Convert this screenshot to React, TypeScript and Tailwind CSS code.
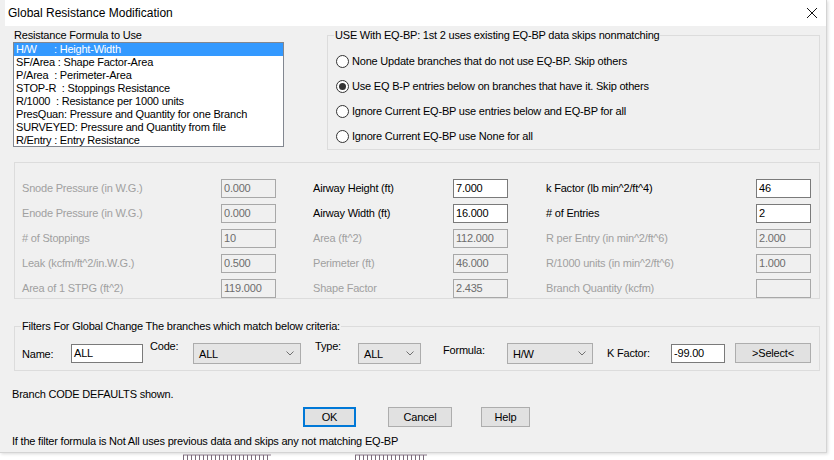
import React from 'react';

const formulas = [
  'H/W      : Height-Width',
  'SF/Area : Shape Factor-Area',
  'P/Area  : Perimeter-Area',
  'STOP-R  : Stoppings Resistance',
  'R/1000  : Resistance per 1000 units',
  'PresQuan: Pressure and Quantity for one Branch',
  'SURVEYED: Pressure and Quantity from file',
  'R/Entry : Entry Resistance',
];

const radios = [
  'None Update branches that do not use EQ-BP. Skip others',
  'Use EQ B-P entries below on branches that have it. Skip others',
  'Ignore Current EQ-BP use entries below and EQ-BP for all',
  'Ignore Current EQ-BP use None for all',
];

type Cell = { label: string; value: string; on?: boolean };

const rows: Cell[][] = [
  [
    { label: 'Snode Pressure (in W.G.)', value: '0.000' },
    { label: 'Airway Height (ft)', value: '7.000', on: true },
    { label: 'k Factor (lb min^2/ft^4)', value: '46', on: true },
  ],
  [
    { label: 'Enode Pressure (in W.G.)', value: '0.000' },
    { label: 'Airway Width (ft)', value: '16.000', on: true },
    { label: '# of Entries', value: '2', on: true },
  ],
  [
    { label: '# of Stoppings', value: '10' },
    { label: 'Area (ft^2)', value: '112.000' },
    { label: 'R per Entry (in min^2/ft^6)', value: '2.000' },
  ],
  [
    { label: 'Leak (kcfm/ft^2/in.W.G.)', value: '0.500' },
    { label: 'Perimeter (ft)', value: '46.000' },
    { label: 'R/1000 units (in min^2/ft^6)', value: '1.000' },
  ],
  [
    { label: 'Area of 1 STPG (ft^2)', value: '119.000' },
    { label: 'Shape Factor', value: '2.435' },
    { label: 'Branch Quantity (kcfm)', value: '' },
  ],
];

const Field = ({ value, on }: { value: string; on?: boolean }) => (
  <div
    className={`w-[55px] h-[19px] border px-[2px] leading-[17px] whitespace-pre ${
      on ? 'bg-white border-[#7a7a7a] text-black' : 'bg-[#f0f0f0] border-[#a8a8a8] text-[#6d6d6d]'
    }`}
  >
    {value}
  </div>
);

const Combo = ({ value, w }: { value: string; w: string }) => (
  <div className={`${w} h-[21px] bg-[#e5e5e5] border border-[#acacac] flex items-center justify-between pl-[5px] pr-[6px]`}>
    <span className="pt-[2px]">{value}</span>
    <svg width="8" height="5" viewBox="0 0 8 5">
      <path d="M0.5 0.5 L4 4 L7.5 0.5" fill="none" stroke="#707070" strokeWidth="1" />
    </svg>
  </div>
);

const Btn = ({ label, w, primary }: { label: string; w: string; primary?: boolean }) => (
  <div
    className={`${w} h-[20px] flex items-center justify-center bg-[#e1e1e1] ${
      primary ? 'border-2 border-[#0078d7]' : 'border border-[#adadad]'
    }`}
  >
    {label}
  </div>
);

export default function App() {
  return (
    <div className="w-[834px] h-[460px] bg-white overflow-hidden text-[11px] leading-[13px] tracking-[-0.2px] text-black font-['Liberation_Sans',Arial,sans-serif]">
      <div className="w-[827px] h-[453px] bg-[#f0f0f0] border-r border-b border-[#d4d4d4] shadow-[1px_1px_3px_rgba(0,0,0,0.15)] flex flex-col">
        {/* title bar */}
        <div className="ml-[5px] h-[26px] bg-white flex items-center justify-between pl-[3px] pr-[8px] shrink-0">
          <span className="text-[12px] tracking-normal text-black">Global Resistance Modification</span>
          <svg width="12" height="12" viewBox="0 0 12 12">
            <path d="M1 1 L11 11 M11 1 L1 11" stroke="#111" strokeWidth="1" />
          </svg>
        </div>

        {/* formula list + EQ-BP options */}
        <div className="flex items-start">
          <div className="ml-[13px] mt-[3px] w-[271px] flex flex-col">
            <div className="pl-[1px]">Resistance Formula to Use</div>
            <div className="h-[105px] bg-white border border-[#828790] flex flex-col">
              {formulas.map((f, i) => (
                <div
                  key={f}
                  className={`h-[13px] pl-[2px] whitespace-pre ${i === 0 ? 'bg-[#3399ff] text-white' : ''}`}
                >
                  {f}
                </div>
              ))}
            </div>
          </div>

          <fieldset className="ml-[43px] mt-[3px] w-[493px] border border-[#dcdcdc] pl-[8px] pt-[7px]">
            <legend className="-ml-[2px] px-[1px]">USE With EQ-BP: 1st 2 uses existing EQ-BP data skips nonmatching</legend>
            {radios.map((r, i) => (
              <div key={r} className="h-[25px] flex items-center">
                <div className="w-[13px] h-[13px] rounded-full border border-[#333] bg-white flex items-center justify-center">
                  {i === 1 && <div className="w-[7px] h-[7px] rounded-full bg-[#333]" />}
                </div>
                <span className="ml-[3px]">{r}</span>
              </div>
            ))}
          </fieldset>
        </div>

        {/* parameters */}
        <div className="ml-[14px] mt-[12px] w-[806px] border border-[#dcdcdc] pl-[7px] pt-[16px] flex flex-col gap-[6px]">
          {rows.map((row, i) => (
            <div key={i} className="h-[19px] flex items-center">
              <div className="w-[199px] text-[#a0a0a0]">{row[0].label}</div>
              <Field value={row[0].value} />
              <div className={`ml-[37px] w-[140px] ${row[1].on ? 'text-black' : 'text-[#a0a0a0]'}`}>{row[1].label}</div>
              <Field value={row[1].value} on={row[1].on} />
              <div className={`ml-[38px] w-[210px] ${row[2].on ? 'text-black' : 'text-[#a0a0a0]'}`}>{row[2].label}</div>
              <Field value={row[2].value} on={row[2].on} />
            </div>
          ))}
        </div>

        {/* filters */}
        <fieldset className="ml-[14px] mt-[21px] w-[806px] border border-[#dcdcdc] pl-[7px] pt-[10px] pb-[6px]">
          <legend className="-ml-[1px] px-[1px]">Filters For Global Change The branches which match below criteria:</legend>
          <div className="h-[21px] flex items-start">
            <div className="w-[49px] mt-[5px]">Name:</div>
            <div className="w-[72px] h-[19px] mt-[1px] bg-white border border-[#7a7a7a] px-[2px] leading-[17px]">ALL</div>
            <div className="ml-[7px] w-[43px] -mt-[3px]">Code:</div>
            <Combo value="ALL" w="w-[108px]" />
            <div className="ml-[14px] w-[43px] -mt-[3px]">Type:</div>
            <Combo value="ALL" w="w-[63px]" />
            <div className="ml-[22px] w-[64px] mt-[1px]">Formula:</div>
            <Combo value="H/W" w="w-[86px]" />
            <div className="ml-[14px] w-[64px] mt-[4px]">K Factor:</div>
            <div className="w-[54px] h-[19px] mt-[1px] bg-white border border-[#7a7a7a] px-[2px] leading-[17px]">-99.00</div>
            <div className="ml-[10px]">
              <Btn label=">Select<" w="w-[76px]" />
            </div>
          </div>
        </fieldset>

        <div className="ml-[12px] mt-[17px]">Branch CODE DEFAULTS shown.</div>
        <div className="mt-[6px] ml-[303px] flex">
          <Btn label="OK" w="w-[53px]" primary />
          <div className="ml-[32px]">
            <Btn label="Cancel" w="w-[64px]" />
          </div>
          <div className="ml-[29px]">
            <Btn label="Help" w="w-[49px]" />
          </div>
        </div>
        <div className="ml-[12px] mt-[8px]">If the filter formula is Not All uses previous data and skips any not matching EQ-BP</div>
      </div>

      {/* bits of the window behind */}
      <div className="flex pl-[183px] pt-[1px]">
        <svg width="88" height="7" viewBox="0 0 88 7">
          <path d="M0 1 H88" stroke="#8a7a8a" strokeWidth="1" />
          {Array.from({ length: 22 }, (_, i) => (
            <path key={i} d={`M${i * 4 + 0.5} 1 V7`} stroke="#7a6a7a" strokeWidth="1" />
          ))}
        </svg>
        <svg width="72" height="7" viewBox="0 0 72 7" className="ml-[84px]">
          <path d="M0 1 H72" stroke="#8a7a8a" strokeWidth="1" />
          {Array.from({ length: 18 }, (_, i) => (
            <path key={i} d={`M${i * 4 + 0.5} 1 V7`} stroke="#7a6a7a" strokeWidth="1" />
          ))}
        </svg>
      </div>
    </div>
  );
}
